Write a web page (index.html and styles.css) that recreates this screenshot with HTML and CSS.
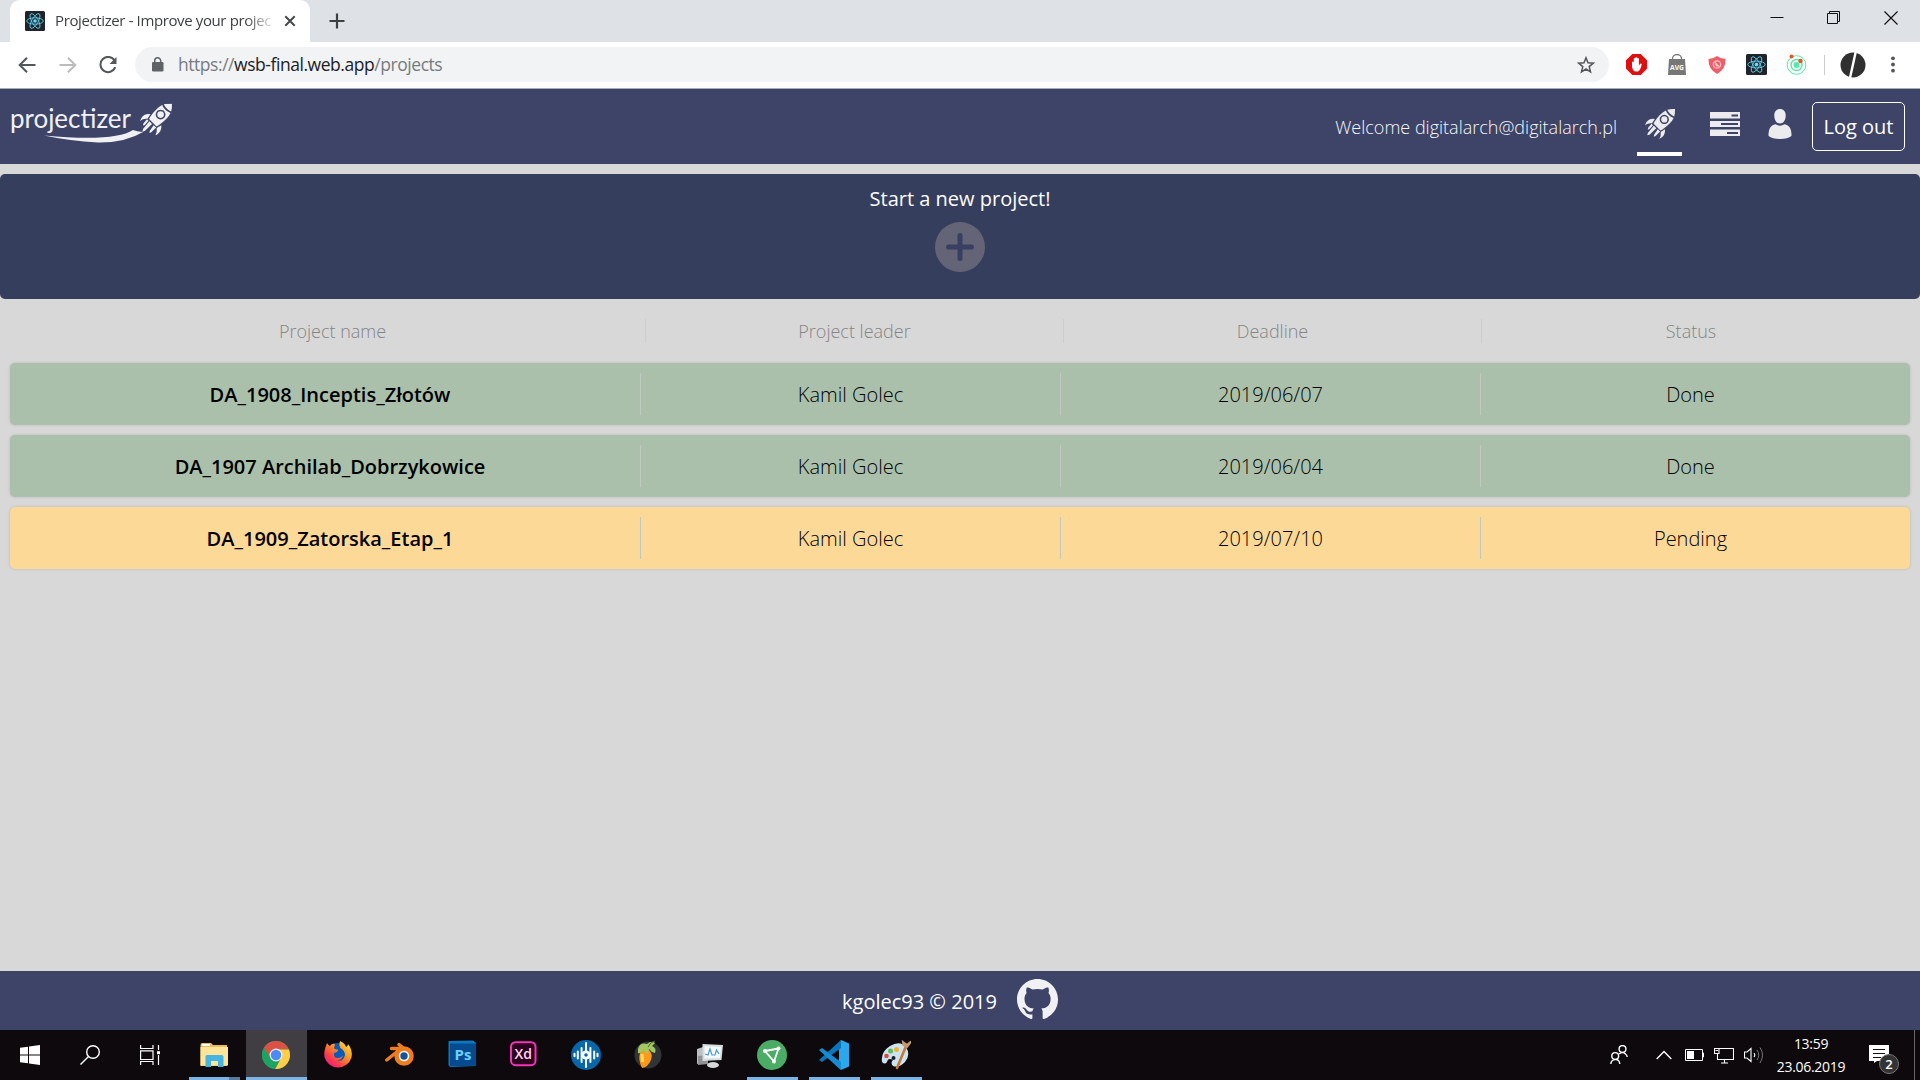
FILE: index.html
```html
<!DOCTYPE html>
<html lang="en">
<head>
<meta charset="utf-8">
<title>Projectizer - Improve your project</title>
<link rel="stylesheet" href="styles.css">
</head>
<body>
<svg class="defs" width="0" height="0">
  <symbol id="rocket" viewBox="0 0 30 30">
    <path d="M22.300 .8Q26 -.1 30 0Q30.100 4 29.200 7.500Q24.500 5.500 22.300 .8Z"/>
    <path fill-rule="evenodd" d="M20.800 1.400Q22.800 6.400 28.600 9Q26.500 14 17.500 20.500L15.500 21.500L8.500 14.500L9.800 12.200Q15.500 4 20.800 1.400ZM19.300 5.800a4.600 4.600 0 1 0 .01 0Z"/>
    <circle cx="19.300" cy="10.400" r="3.100"/>
    <path d="M9.800 10L7 14.300Q3 13.800 0 16.300Q1 12.500 4 10.800Q6.500 9.400 9.800 10ZM20 20.300L15.700 23Q16.200 27 14.300 30Q17.500 28.500 19 26Q20.400 23.500 20 20.300Z"/>
    <path d="M6.500 14.800L8 16.200L4.300 20.300L2.700 20.700L3.300 18.600ZM8.800 16.700L11.300 19.200L4.500 25.700L2.300 26.200L2.800 24ZM12.800 20.300L15.200 22.600L10.300 27.200L8.700 27.500L9.200 25.500Z"/>
  </symbol>
  <symbol id="react" viewBox="0 0 20 20">
    <rect width="20" height="20" rx="1.500" fill="#20232a"/>
    <g fill="none" stroke="#61dafb" stroke-width=".8"><ellipse cx="10" cy="10" rx="8.300" ry="3.200"/><ellipse cx="10" cy="10" rx="8.300" ry="3.200" transform="rotate(60 10 10)"/><ellipse cx="10" cy="10" rx="8.300" ry="3.200" transform="rotate(120 10 10)"/></g>
    <circle cx="10" cy="10" r="1.800" fill="#61dafb"/>
  </symbol>
</svg>

<div class="tabstrip">
  <div class="tab">
    <svg class="favicon" width="20" height="20"><use href="#react"/></svg>
    <span class="tab-title">Projectizer - Improve your projec</span>
    <svg width="12" height="12" viewBox="0 0 12 12"><path d="M1.300 1.300L10.700 10.700M10.700 1.300L1.300 10.700" stroke="#45494d" stroke-width="2"/></svg>
  </div>
  <svg class="newtab" width="16" height="16" viewBox="0 0 16 16"><path d="M8 .5V15.500M.5 8H15.500" stroke="#3c4043" stroke-width="2.200"/></svg>
  <div class="winbtns">
    <svg width="14" height="14" viewBox="0 0 14 14"><path d="M.5 6.500H13.500" stroke="#111"/></svg>
    <svg width="14" height="14" viewBox="0 0 14 14"><path d="M.5 2.500H10.500V12.500H.5ZM2.500 2V.5H12.500V10.500H11" fill="none" stroke="#111"/></svg>
    <svg width="14" height="14" viewBox="0 0 14 14"><path d="M.5 .5L13.500 13.500M13.500 .5L.5 13.500" stroke="#111" stroke-width="1.200"/></svg>
  </div>
</div>

<div class="toolbar">
  <svg width="18" height="16" viewBox="0 0 18 16"><path d="M17.500 8H2M9 .8L1.700 8L9 15.200" fill="none" stroke="#53575b" stroke-width="2"/></svg>
  <svg class="fwd" width="18" height="16" viewBox="0 0 18 16"><path d="M.5 8H16M9 .8L16.300 8L9 15.200" fill="none" stroke="#babcbe" stroke-width="2"/></svg>
  <svg class="reload" width="18" height="18" viewBox="0 0 18 18"><path d="M15.600 4.600A7.600 7.600 0 1 0 16.200 11.200" fill="none" stroke="#53575b" stroke-width="2"/><path d="M17.500 1V8H10.500Z" fill="#53575b"/></svg>
  <div class="omnibox">
    <svg width="12" height="15" viewBox="0 0 12 15"><rect y="5" width="11.500" height="9.500" rx="1.300" fill="#5f6368"/><path d="M2.700 6V3.800a3 3 0 0 1 6 0V6" fill="none" stroke="#5f6368" stroke-width="1.500"/></svg>
    <span class="url">https://<b>wsb-final.web.app</b>/projects</span>
    <svg class="star" width="18" height="18" viewBox="0 0 18 18"><path d="M9 1.800L11 6.800L16.300 7.200L12.200 10.600L13.500 15.900L9 13L4.500 15.900L5.800 10.600L1.700 7.200L7 6.800Z" fill="none" stroke="#53575b" stroke-width="1.500"/></svg>
  </div>
  <div class="exts">
    <svg width="21" height="21" viewBox="0 0 21 21"><path d="M6.300 0H14.700L21 6.300V14.700L14.700 21H6.300L0 14.700V6.300Z" fill="#e01010"/><path d="M6 8q1-1 1.800 0v2V4.500q.9-1 1.700 0V9V3.500q.9-1 1.700 0V9V4.500q.9-1 1.700 0V12l1-2q1.300-1.100 1.800 0q-1 6-3.700 7.500H9Q6.300 16 6 13Z" fill="#fff"/></svg>
    <svg width="18" height="21" viewBox="0 0 18 21"><path d="M4.500 6V4.500a4.500 4 0 0 1 9 0V6" fill="none" stroke="#777" stroke-width="1.300"/><path d="M1 5H17L18 21H0Z" fill="#777"/><text x="9" y="15.500" text-anchor="middle" textLength="14" lengthAdjust="spacingAndGlyphs" class="avg">AVG</text></svg>
    <svg width="18" height="18" viewBox="0 0 18 18"><path d="M9 0Q13 3 17.500 3Q18 13 9 18Q0 13 .5 3Q5 3 9 0Z" fill="#ed5f68"/><circle cx="9" cy="8.500" r="3.700" fill="none" stroke="#ffc0c2" stroke-width="1.200"/><path d="M6.500 6L11.500 11M7 8L9.500 10.500" stroke="#ffc0c2" stroke-width="1.200"/></svg>
    <svg width="21" height="21" viewBox="0 0 20 20"><use href="#react"/></svg>
    <svg width="21" height="21" viewBox="0 0 21 21"><g fill="none" stroke="#58e9a8"><circle cx="10.500" cy="11" r="9.300"/><circle cx="10.500" cy="11" r="5.500" stroke-width="1.400"/></g><circle cx="10.500" cy="11" r="3" fill="#58e9a8"/><circle cx="5.500" cy="2.500" r="2" fill="#e25626"/><circle cx="14.500" cy="7" r="2.200" fill="#e25626"/></svg>
    <i></i>
    <svg width="26" height="26" viewBox="0 0 26 26"><circle cx="13" cy="13" r="12.500" fill="#303030"/><path d="M15.700 0L10 26" stroke="#fff" stroke-width="2.400"/></svg>
    <svg width="4" height="17" viewBox="0 0 4 17"><g fill="#53575b"><circle cx="2" cy="2.300" r="1.900"/><circle cx="2" cy="8.500" r="1.900"/><circle cx="2" cy="14.700" r="1.900"/></g></svg>
  </div>
</div>

<header class="nav">
  <svg class="logo" width="176" height="54" viewBox="0 0 176 54">
    <text x="10" y="39" textLength="121" lengthAdjust="spacingAndGlyphs" class="logo-text">projectizer</text>
    <path d="M44 46.500Q115 53 133 41Q139 43.500 144 42.500Q125 54 98 53.500Q70 52 44 46.500Z" fill="#f1f1f4"/>
    <svg x="139" y="14.500" width="34" height="32"><use href="#rocket" fill="#f1f1f4"/></svg>
  </svg>
  <span class="welcome">Welcome digitalarch@digitalarch.pl</span>
  <div class="nav-item active"><svg width="30" height="30" fill="#ececef"><use href="#rocket"/></svg></div>
  <div class="nav-item bars"><svg width="30" height="24" viewBox="0 0 30 24"><path fill="#ececef" fill-rule="evenodd" d="M0 0H30V6.500H0ZM0 9H30V15H0ZM0 17.500H30V24H0ZM21.500 2.500V4.500H28V2.500ZM11 11V13H28V11ZM17 20V22H28V20Z"/></svg></div>
  <div class="nav-item user"><svg width="24" height="30" viewBox="0 0 24 30"><path fill="#ececef" d="M12 0C15.500 0 17.700 2.500 17.700 6.500C17.700 11 15.500 14.500 12 14.500S6.300 11 6.300 6.500C6.300 2.500 8.500 0 12 0ZM7.500 15.300Q12 18 16.500 15.300Q22 16.500 23 21.500Q23.700 25 23.400 27Q20 30 12 30T.6 27Q.3 25 1 21.500Q2 16.500 7.500 15.300Z"/></svg></div>
  <button class="logout">Log out</button>
</header>

<main>
  <section class="new-project">
    <span>Start a new project!</span>
    <svg width="50" height="50" viewBox="0 0 50 50"><circle cx="25" cy="25" r="25" fill="#636577"/><path d="M25 13.500V36.500M13.500 25H36.500" stroke="#393f61" stroke-width="5" stroke-linecap="round"/></svg>
  </section>
  <div class="head"><span>Project name</span><span>Project leader</span><span>Deadline</span><span>Status</span></div>
  <div class="list">
    <div class="row done"><strong>DA_1908_Inceptis_Złotów</strong><span>Kamil Golec</span><span>2019/06/07</span><span>Done</span></div>
    <div class="row done"><strong>DA_1907 Archilab_Dobrzykowice</strong><span>Kamil Golec</span><span>2019/06/04</span><span>Done</span></div>
    <div class="row pending"><strong>DA_1909_Zatorska_Etap_1</strong><span>Kamil Golec</span><span>2019/07/10</span><span>Pending</span></div>
  </div>
</main>

<footer class="footer">
  <span>kgolec93 © 2019</span>
  <svg width="41" height="41" viewBox="0 0 16 16"><path fill="#f1f1f3" d="M8 0C3.580 0 0 3.580 0 8c0 3.540 2.290 6.530 5.470 7.590.4.070.55-.17.55-.38 0-.19-.01-.82-.01-1.490-2.010.37-2.530-.49-2.690-.94-.09-.23-.48-.94-.82-1.130-.28-.15-.68-.52-.01-.53.63-.01 1.080.58 1.230.82.72 1.210 1.870.87 2.330.66.07-.52.28-.87.51-1.070-1.780-.2-3.640-.89-3.640-3.950 0-.87.31-1.590.82-2.150-.08-.2-.36-1.020.08-2.120 0 0 .67-.21 2.200.82.64-.18 1.320-.27 2-.27s1.360.09 2 .27c1.530-1.040 2.200-.82 2.200-.82.44 1.100.16 1.920.08 2.120.51.56.82 1.270.82 2.150 0 3.070-1.870 3.750-3.650 3.950.29.25.54.73.54 1.480 0 1.070-.01 1.930-.01 2.200 0 .21.15.46.55.38A8.010 8.010 0 0 0 16 8c0-4.420-3.580-8-8-8z"/></svg>
</footer>

<div class="taskbar">
  <div class="sys"><svg width="20" height="20" viewBox="0 0 20 20"><path fill="#fff" d="M0 2.800L8 1.700V9.500H0ZM9 1.500L20 0V9.500H9ZM0 10.500H8V18.300L0 17.200ZM9 10.500H20V20L9 18.500Z"/></svg></div>
  <div class="sys"><svg width="20" height="20" viewBox="0 0 20 20"><g fill="none" stroke="#fff" stroke-width="1.400"><circle cx="13" cy="7" r="6.300"/><path d="M8.500 11.500L.5 19.500"/></g></svg></div>
  <div class="sys"><svg width="20" height="20" viewBox="0 0 20 20"><g fill="none" stroke="#fff" stroke-width="1.200"><path d="M.6 0V3.500H13V0M.6 20V16.500H13V20M.6 5.800H13V14.500H.6ZM18.500 0V5M18.500 10V20"/></g><rect x="17" y="6.200" width="3" height="3" fill="#fff"/></svg></div>
  <div class="apps">
    <div class="app open multi"><svg width="30" height="30" viewBox="0 0 30 30"><path d="M1.500 5Q1.500 3 3 3H12L14 5H28V26H1.500Z" fill="#e9bd52"/><rect x="3" y="4" width="8" height="2" fill="#f7fbff"/><path d="M1.500 7H29V25.500H1.500Z" fill="#fde69c"/><path d="M6.500 27V16.500Q6.500 15 8 15H22.500Q24.500 15 24.500 16.500V27H19V21H12V27Z" fill="#46b4e0"/></svg></div>
    <div class="app open current"><svg width="30" height="30" viewBox="0 0 30 30"><circle cx="15" cy="15" r="14" fill="#1da362"/><path d="M15 15L2.900 8A14 14 0 0 1 27.900 9.500H15Z" fill="#dd5144"/><path d="M15 9.500H27.900A14 14 0 0 1 14 29L20 18Z" fill="#ffcd46"/><path d="M2.900 8L10 18L15 10Z" fill="#dd5144"/><path d="M2.800 8L9 18.500L12 21L20 18L14 29A14 14 0 0 1 2.800 8Z" fill="#1da362"/><circle cx="15" cy="15" r="6.500" fill="#f1f1f1"/><circle cx="15" cy="15" r="5.200" fill="#4c8bf5"/></svg></div>
    <div class="app"><svg width="30" height="30" viewBox="0 0 30 30"><defs><linearGradient id="ff" x1="1" y1="0" x2=".1" y2="1"><stop offset="0" stop-color="#fff14a"/><stop offset=".4" stop-color="#ff9a1d"/><stop offset=".75" stop-color="#ff3750"/><stop offset="1" stop-color="#e7139a"/></linearGradient></defs><circle cx="14.500" cy="14" r="11" fill="#075bba"/><path d="M17 1Q22 3 23 7Q25 6 25 4Q30 10 28.500 17.500A14 14 0 0 1 1.500 17Q.5 11 4 3Q5 5 7 6Q9 3 12 4L11 8Q12 10 15 9.500Q15 12 11 13Q10 18 15 18Q18 18 20 15.500Q18 21 13 20Q20 23 22 15Q22 11 17.500 8Q15.500 5 17 1Z" fill="url(#ff)"/></svg></div>
    <div class="app"><svg width="30" height="30" viewBox="0 0 30 30"><path d="M14 4.500L26 14.500M6.500 8.500H19M1.700 20L13 11" stroke="#ee7d22" stroke-width="3.400" stroke-linecap="round"/><circle cx="19" cy="16" r="7.500" fill="#fff" stroke="#ee7d22" stroke-width="4.500"/><circle cx="19" cy="16" r="3.700" fill="#15549b"/></svg></div>
    <div class="app"><svg width="30" height="30" viewBox="0 0 30 30"><path d="M1.500 1L26 .5L29 3V26L3 27L1.500 25Z" fill="#087ac4"/><path d="M3 3.500H29V26H3Z" fill="#064b90"/><text x="16" y="19.500" text-anchor="middle" class="ps">Ps</text></svg></div>
    <div class="app"><svg width="30" height="30" viewBox="0 0 30 30"><rect x="2" y="2.200" width="24.500" height="23" rx="4.500" fill="#2b001e" stroke="#f335b8" stroke-width="2"/><text x="14.200" y="18.700" text-anchor="middle" class="xd">Xd</text></svg></div>
    <div class="app"><svg width="30" height="30" viewBox="0 0 30 30"><circle cx="15" cy="15" r="15" fill="#0767a9"/><path d="M3.500 13.700V16.300M6.800 11.500V18.500M10.600 8V22M15 3V27M19.400 8V22M23.200 11.500V18.500M26.500 13.700V16.300" stroke="#fff" stroke-width="2" stroke-linecap="round"/><circle cx="15" cy="15" r="4.500" fill="#fff"/><circle cx="15" cy="15" r="1.800" fill="#0767a9"/></svg></div>
    <div class="app"><svg width="30" height="30" viewBox="0 0 30 30"><circle cx="15" cy="15" r="13.500" fill="#303437"/><path d="M7 13Q10 8 16 10Q20 14 18 20Q15 27 9 28Q5 20 7 13Z" fill="#ff991b"/><path d="M9 14L9.500 22" stroke="#ffe15b" stroke-width="3"/><path d="M5 9Q7 2 14 4Q19 0 22 3L19 6Q24 8 22 13Q18 12 16 9Q15 15 12 13L11 10Q8 14 5 13Z" fill="#a2c761"/><path d="M15 7Q17 2 22 1" fill="none" stroke="#456c21"/></svg></div>
    <div class="app"><svg width="30" height="30" viewBox="0 0 30 30"><path d="M2 9L8 7V22L2 24Z" fill="#bcbfc1"/><path d="M3 16L13 15V24L3 25Z" fill="#8e9294"/><path d="M7.500 4L28 5L26.500 20L7.500 21Z" fill="#d7dcde"/><path d="M9.500 6L26 7L25 18L9.500 18.500Z" fill="#f5f9fb"/><path d="M10 14L13 15L15 9L17 15H20L21.500 10L24 14" fill="none" stroke="#4a9bd5" stroke-width="1.200"/><ellipse cx="18" cy="25" rx="6" ry="3" fill="#d5d7d8"/></svg></div>
    <div class="app open"><svg width="30" height="30" viewBox="0 0 30 30"><circle cx="15" cy="15" r="15" fill="#4bad65"/><path d="M8 11L21.500 8.500L17 21.500Z" fill="none" stroke="#fff" stroke-width="1.800"/><circle cx="8" cy="11" r="2" fill="#fff"/><circle cx="21.500" cy="8.500" r="2" fill="#fff"/><circle cx="17" cy="21.500" r="2" fill="#fff"/></svg></div>
    <div class="app open"><svg width="30" height="30" viewBox="0 0 30 30"><path d="M22 0L30 3.500V26.500L22 30L20 26V4Z" fill="#2ba7ee"/><path d="M0 20L22 0V8L3 22Z" fill="#0876bb"/><path d="M0 10L3 8L22 22V30L20 28.500Z" fill="#168bd2"/></svg></div>
    <div class="app open"><svg width="30" height="30" viewBox="0 0 30 30"><path d="M1 22Q-.5 12 9 6Q19 0 25 7Q30 15 24 22Q18 28 12 26Q9 23 12 20Q7 17 6 22Q4 25 1 22Z" fill="#cce4f2"/><circle cx="5.500" cy="16" r="2.300" fill="#dc4b3c"/><circle cx="9.500" cy="11" r="2.500" fill="#62b95b"/><circle cx="15.500" cy="9.500" r="2.500" fill="#ebb43b"/><circle cx="12.500" cy="18" r="2" fill="#17212b"/><path d="M25.500 5L16 28" stroke="#c57b35" stroke-width="2.600" stroke-linecap="round"/><path d="M22 2L26 5L30 1.500L26 7L22.500 5Z" fill="#c79a6b" stroke="#c79a6b" stroke-width="2"/></svg></div>
  </div>
  <div class="tray">
    <svg width="18" height="20" viewBox="0 0 18 20"><g fill="none" stroke="#fff" stroke-width="1.400"><circle cx="12.500" cy="4" r="3.400"/><circle cx="5.200" cy="11" r="3.400"/><path d="M.8 19Q1 15 5.200 14.600T9.800 19M9 9Q13 6 15.500 9Q17 10 17.200 12"/></g></svg>
    <svg class="chev" width="16" height="10" viewBox="0 0 16 10"><path d="M.7 9L8 1.500L15.300 9" fill="none" stroke="#fff" stroke-width="1.400"/></svg>
    <svg class="batt" width="20" height="12" viewBox="0 0 20 12"><path d="M.5 .5H17.500V11.500H.5ZM18 4H18.500V8H18" fill="none" stroke="#fff"/><rect x="2" y="2" width="7" height="8" fill="#fff"/></svg>
    <svg class="net" width="20" height="17" viewBox="0 0 20 17"><path d="M5 1.500H19.500V12.500H3.500V7M10.500 13V16M7 16H14M.5 1.500H5V6.500H.5ZM1.500 3.500H4" fill="none" stroke="#fff" stroke-width="1.100"/></svg>
    <svg class="vol" width="21" height="18" viewBox="0 0 21 18"><path d="M.5 6H3L7 2.500V15.500L3 12H.5Z M10 7Q11.500 9 10 11" fill="none" stroke="#fff" stroke-width="1.100"/><path d="M13 4Q16.500 9 13 14M16 1.500Q21 9 16 17" fill="none" stroke="#777"/></svg>
    <div class="clock"><span>13:59</span><span>23.06.2019</span></div>
    <div class="note"><svg width="20" height="18" viewBox="0 0 20 18"><path d="M0 0H20V16H8L5 18V16H0Z" fill="#fff"/><path d="M4 4.500H16M4 8.500H16M4 12.500H12" stroke="#111"/></svg><em>2</em></div>
    <i class="peek"></i>
  </div>
</div>
</body>
</html>
```
FILE: styles.css
```css
* { box-sizing: border-box; }
body { margin: 0; width: 1920px; height: 1080px; overflow: hidden; display: flex; flex-direction: column; background: #d8d8d8; font-family: "Open Sans", sans-serif; font-size: 20px; color: #000; }
svg { display: block; flex: none; }
.defs { display: none; }

.tabstrip { height: 42px; flex: none; background: #dee1e6; display: flex; align-items: center; padding-left: 10px; }
.tab { width: 300px; height: 42px; background: #fff; border-radius: 10px 10px 0 0; display: flex; align-items: center; padding-left: 15px; }
.tab-title { width: 217px; margin: -2px 12px 0 10px; white-space: nowrap; font-size: 15px; letter-spacing: -.38px; color: #3c4043; -webkit-mask-image: linear-gradient(to right, #000 190px, rgba(0,0,0,.15) 217px); mask-image: linear-gradient(to right, #000 190px, rgba(0,0,0,.15) 217px); }
.newtab { margin-left: 19px; }
.winbtns { margin: -6px 22px 0 auto; display: flex; gap: 43px; }

.toolbar { height: 47px; flex: none; background: #fff; border-bottom: 1px solid #a9abb5; display: flex; align-items: center; padding: 0 0 1px 18px; }
.fwd { margin-left: 23px; }
.reload { margin-left: 22px; }
.omnibox { width: 1474px; height: 35px; margin-left: 18px; border-radius: 18px; background: #f1f3f4; display: flex; align-items: center; padding: 0 14px 0 17px; }
.url { margin: -1px 0 0 14px; font-size: 17.500px; letter-spacing: -.45px; color: #777b7f; white-space: nowrap; }
.url b { font-weight: 400; color: #202124; }
.star { margin-left: auto; }
.exts { display: flex; align-items: center; margin-left: 17px; }
.exts svg:nth-child(2) { margin-left: 21px; }
.exts svg:nth-child(3) { margin-left: 22px; }
.exts svg:nth-child(4) { margin-left: 20px; }
.exts svg:nth-child(5) { margin-left: 19px; }
.exts i { width: 1px; height: 20px; margin: 0 15px 0 17px; background: #ccc; }
.exts svg:nth-child(8) { margin-left: 25px; }
.avg { font: bold 7px "Open Sans", sans-serif; fill: #fff; }

.nav { height: 75px; flex: none; background: #3d4467; display: flex; padding-right: 15px; color: #f7f7fa; }
.logo-text { font: 26px Lato, sans-serif; fill: #f1f1f4; }
.welcome { margin: 24px 20px 0 auto; font-size: 18px; line-height: 28px; font-weight: 300; }
.nav-item { height: 67px; padding-top: 20px; display: flex; justify-content: center; align-items: flex-start; }
.active { width: 45px; border-bottom: 4px solid #fff; }
.bars { width: 30px; margin-left: 28px; padding-top: 23px; }
.user { width: 24px; margin-left: 28px; }
.logout { width: 93px; height: 49px; margin: 13px 0 0 20px; padding: 0; background: none; border: 1px solid #fff; border-radius: 5px; color: #fff; font: 20px "Open Sans", sans-serif; }

main { flex: 1; padding-top: 10px; }
.new-project { height: 125px; background: #363e5e; border-radius: 5px; color: #fff; display: flex; flex-direction: column; align-items: center; padding-top: 11px; line-height: 27px; }
.new-project svg { margin-top: 10px; }
.head { display: grid; grid-template-columns: 625px 418px 418px 1fr; padding: 0 20px; margin-top: 20px; height: 24px; line-height: 24px; text-align: center; font-size: 18px; font-weight: 300; color: #858585; }
.head > * + * { border-left: 1px solid #cdcdcd; }
.list { display: flex; flex-direction: column; gap: 10px; padding: 0 10px; margin-top: 20px; }
.row { height: 62px; border-radius: 5px; padding: 10px; display: grid; grid-template-columns: 620px 420px 420px 1fr; line-height: 44px; text-align: center; font-weight: 300; box-shadow: 0 0 3px rgba(0,0,0,.16); }
.row > * { height: 42px; }
.row strong { font-weight: 600; }
.row > * + * { border-left: 1px solid #c0c8c0; }
.done { background: #abc0aa; }
.pending { background: #fdd997; }

.footer { height: 59px; flex: none; background: #3d4467; color: #fff; display: flex; align-items: center; justify-content: center; gap: 20px; padding: 0 20px 2px 0; }
.footer span { padding-top: 3px; }

.taskbar { height: 50px; flex: none; background: #0d090d; display: flex; color: #fff; }
.sys { width: 60px; display: flex; align-items: center; justify-content: center; }
.apps { display: flex; gap: 1px; margin-left: 4px; }
.app { width: 61px; height: 50px; display: flex; justify-content: center; padding: 10px 2px 0 0; background-repeat: no-repeat; }
.open { background-image: linear-gradient(#7bb3e4, #7bb3e4); background-position: 5px 47px; background-size: 51px 3px; }
.multi { background-image: linear-gradient(to right, #7bb3e4 40px, #587b9b 40px); }
.current { background-color: #403e42; background-position: 0 47px; background-size: 61px 3px; }
.ps { font: bold 15px "Open Sans", sans-serif; fill: #6bd0fc; }
.xd { font: 600 14px "Open Sans", sans-serif; fill: #ffd8f4; }
.tray { margin-left: auto; display: flex; align-items: center; }
.chev { margin-left: 28px; }
.batt { margin-left: 13px; }
.net { margin-left: 9px; }
.vol { margin-left: 10px; }
.clock { width: 74px; margin-left: 9px; display: flex; flex-direction: column; align-items: center; font-size: 14px; line-height: 23px; letter-spacing: -.3px; }
.note { position: relative; margin: -3px 0 0 21px; }
.note em { position: absolute; left: 10px; top: 9px; width: 20px; height: 20px; border-radius: 50%; background: #333; border: 1px solid #777; font: 600 13px/18px "Open Sans", sans-serif; text-align: center; }
.peek { width: 1px; height: 50px; margin: 0 5px 0 25px; background: #666; }
```
